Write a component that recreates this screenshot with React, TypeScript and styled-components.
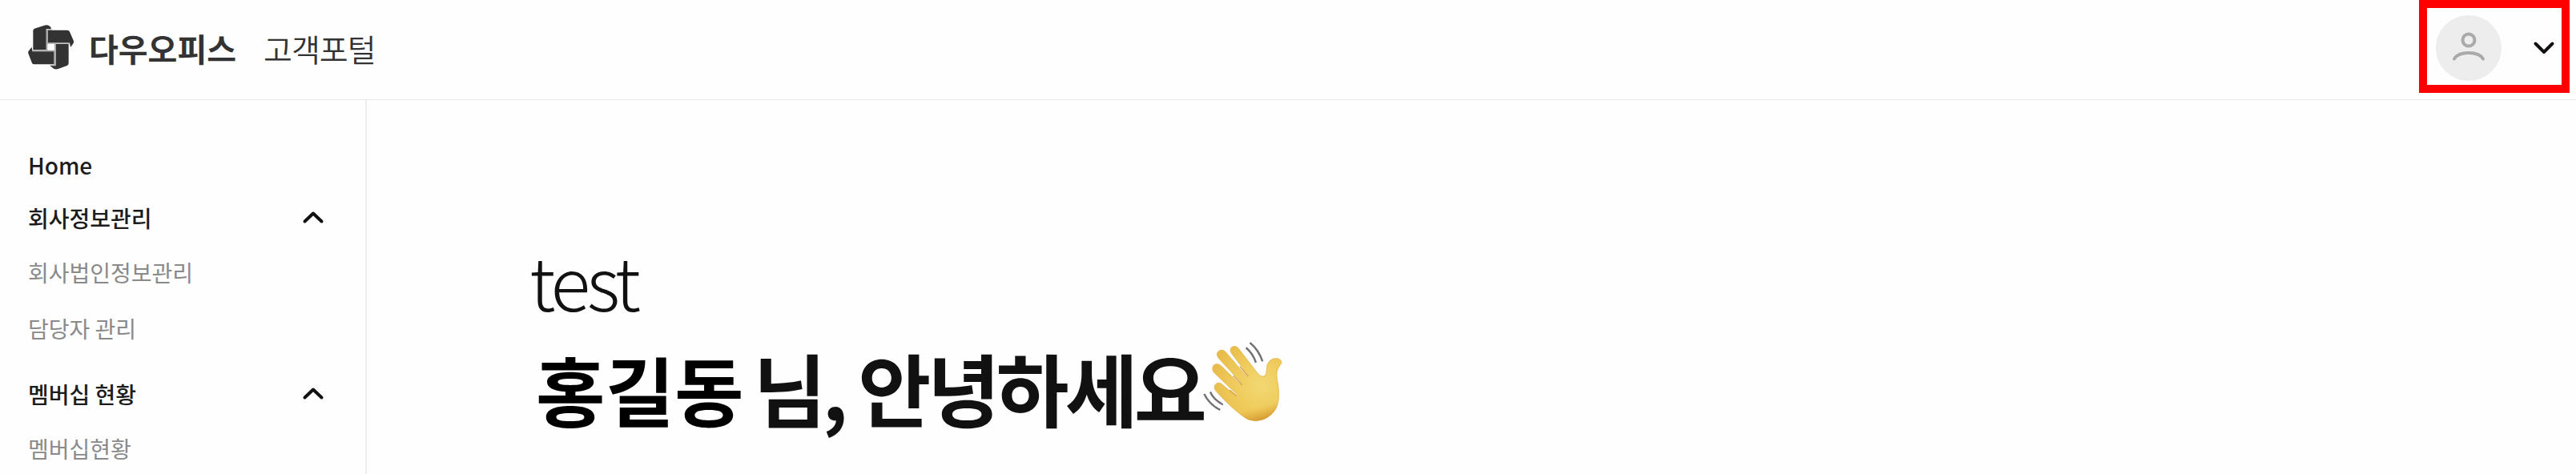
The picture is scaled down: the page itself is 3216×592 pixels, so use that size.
import React, { useState } from "react";
import styled, { createGlobalStyle } from "styled-components";

const GlobalStyle = createGlobalStyle`
  *, *::before, *::after { box-sizing: border-box; }
  html, body { margin: 0; padding: 0; }
  body {
    background: #fefefe;
    color: #111;
    font-family: "Noto Sans CJK KR", "Noto Sans", sans-serif;
  }
  button { font: inherit; color: inherit; background: none; cursor: pointer; }
  a { color: inherit; text-decoration: none; }
`;

const Page = styled.div`
  display: flex;
  flex-direction: column;
  min-height: 100vh;
`;

const Header = styled.header`
  display: flex;
  align-items: flex-start;
  justify-content: space-between;
  min-height: 125px;
  padding: 0 8px 0 34px;
  border-bottom: 1px solid #e8e8e8;
`;

const Brand = styled.a`
  display: flex;
  align-items: center;
  height: 120px;
  color: #333;
`;

const BrandName = styled.span`
  margin-left: 17px;
  font-size: 40px;
  font-weight: 700;
  line-height: 60px;
`;

const PortalName = styled.span`
  margin-left: 34px;
  font-size: 39px;
  font-weight: 350;
  line-height: 60px;
  letter-spacing: -1px;
`;

const UserButton = styled.button`
  display: flex;
  align-items: center;
  gap: 38px;
  height: 116px;
  padding: 4px 7px 0 11px;
  border: 10px solid #f00;
`;

const Avatar = styled.span`
  display: flex;
  width: 82px;
  height: 82px;
  border-radius: 50%;
  background: #ededed;
`;

const Body = styled.div`
  display: flex;
  flex: 1;
`;

const Sidebar = styled.nav`
  flex: none;
  width: 458px;
  padding: 48px 50px 0 35px;
  border-right: 2px solid #eee;
  color: #1c1c1c;
  font-size: 28px;
`;

const HomeLink = styled.a`
  display: block;
  font-weight: 500;
  line-height: 66px;
`;

const Group = styled.section`
  & + & { margin-top: 28px; }
`;

const GroupButton = styled.button`
  display: flex;
  align-items: center;
  justify-content: space-between;
  width: 100%;
  height: 66px;
  padding: 0;
  border: 0;
  font-weight: 500;
`;

const SubMenu = styled.ul`
  display: flex;
  flex-direction: column;
  gap: 28px;
  margin: 0;
  padding: 14px 0 0;
  list-style: none;
  color: #8a8a8a;
  line-height: 42px;
`;

const Main = styled.main`
  flex: 1;
  padding: 157px 40px 0 203px;
`;

const Greeting = styled.h1`
  margin: 0;
  font-size: 99px;
  font-weight: 700;
  line-height: 134px;
  letter-spacing: -0.05em;
`;

const Company = styled.span`
  display: block;
  font-size: 92px;
  font-weight: 300;
  letter-spacing: -0.05em;
`;

const UserName = styled.span`
  margin: 0 12px 0 8px;
  color: #000;
  font-size: 94px;
  letter-spacing: 0;
`;

const WaveIcon = styled.svg`
  width: 99px;
  height: 99px;
`;

const Chevron = ({ up = false }: { up?: boolean }) => (
  <svg width="30" height="20" viewBox="0 0 30 20" fill="none" stroke="#111" strokeWidth="4" strokeLinecap="round" strokeLinejoin="round" aria-hidden="true">
    <path d={up ? "M4.5 14.5 15 4.500 25.500 14.500" : "M4.500 4.500 15 15 25.500 4.500"} />
  </svg>
);

const Logo = () => (
  <svg width="60" height="60" viewBox="42 34 180 180" aria-hidden="true">
    <path fill="none" stroke="#aaa" strokeWidth="4" d="M61 132.500H116V55M116 55H134M116 106H202M146 190V106M146 190H128M61 134H144V186" />
    <g fill="#333">
      <path d="M64 130V59Q64 54 69 51L104 40Q115 36 123 40L131 47V52H113V130Z" />
      <path d="M119 57H192Q199 57 201 63L216 98Q217 104 213 109L204 121L201 104H119Z" />
      <path d="M149 109H197V181Q197 187 191 190L158 202Q148 205 141 201L128 191H149Z" />
      <path d="M59 120L61 137H142V185H68Q62 185 60 180L46 144Q44 139 47 135Z" />
    </g>
  </svg>
);

const UserGlyph = () => (
  <svg width="82" height="82" viewBox="0 0 82 82" fill="none" stroke="#aaa" strokeWidth="4" strokeLinecap="round" aria-hidden="true">
    <circle cx="41" cy="31" r="7.500" />
    <path d="M23 54.500C26 49.500 33 47 41 47S56 49.500 59 54.500" />
  </svg>
);

const Wave = () => (
  <WaveIcon viewBox="1170 79 288 288" role="img" aria-label="손 흔들기">
    <defs>
      <radialGradient id="skin" gradientUnits="userSpaceOnUse" cx="1380" cy="235" r="175">
        <stop offset="0" stopColor="#f2d873" />
        <stop offset="0.550" stopColor="#efcb5b" />
        <stop offset="1" stopColor="#e9bd4c" />
      </radialGradient>
      <linearGradient id="shade" gradientUnits="userSpaceOnUse" x1="1370" y1="240" x2="1405" y2="368">
        <stop offset="0.550" stopColor="#d99a2b" stopOpacity="0" />
        <stop offset="1" stopColor="#c98322" stopOpacity="0.850" />
      </linearGradient>
      <path id="hand" d="M1272 100C1280 92 1292 94 1298 102L1366 190C1374 201 1386 208 1394 202C1402 194 1400 180 1402 168C1405 150 1420 138 1438 139C1449 140 1456 148 1455 155C1452 163 1440 172 1438 190C1436 205 1440 220 1443 240C1448 285 1445 320 1415 345C1390 367 1350 372 1325 356C1295 337 1258 303 1217 258C1207 245 1211 231 1224 228C1233 227 1240 233 1246 239L1290 277L1295 272L1211 192C1201 181 1202 164 1216 160C1225 158 1233 163 1239 169L1307 237L1312 232L1226 138C1216 124 1221 112 1234 109C1243 107 1250 113 1255 119L1329 206L1334 201L1274 122C1268 112 1268 106 1272 100Z" />
    </defs>
    <use href="#hand" fill="url(#skin)" stroke="#e0aa3e" strokeWidth="2" />
    <use href="#hand" fill="url(#shade)" />
    <g fill="none" stroke="#d79c35" strokeWidth="4" strokeLinecap="round">
      <path d="M1290 274L1268 255M1310 234L1280 203M1332 203L1304 169" />
    </g>
    <g fill="none" stroke="#727272" strokeWidth="7">
      <path d="M1340 82Q1372 108 1386 150M1326 100Q1350 120 1362 154M1174 268Q1193 307 1232 326M1196 261Q1208 289 1242 307" />
    </g>
  </WaveIcon>
);

const groups = [
  { title: "회사정보관리", items: ["회사법인정보관리", "담당자 관리"] },
  { title: "멤버십 현황", items: ["멤버십현황"] },
];

const MenuGroup = ({ title, items }: { title: string; items: string[] }) => {
  const [open, setOpen] = useState(true);
  return (
    <Group>
      <GroupButton type="button" aria-expanded={open} onClick={() => setOpen(!open)}>
        {title}
        <Chevron up={open} />
      </GroupButton>
      {open && (
        <SubMenu>
          {items.map((item) => (
            <li key={item}><a href="#">{item}</a></li>
          ))}
        </SubMenu>
      )}
    </Group>
  );
};

export default function App() {
  return (
    <Page>
      <GlobalStyle />
      <Header>
        <Brand href="#">
          <Logo />
          <BrandName>다우오피스</BrandName>
          <PortalName>고객포털</PortalName>
        </Brand>
        <UserButton type="button" aria-label="사용자 메뉴">
          <Avatar><UserGlyph /></Avatar>
          <Chevron />
        </UserButton>
      </Header>
      <Body>
        <Sidebar>
          <HomeLink href="#">Home</HomeLink>
          {groups.map((group) => (
            <MenuGroup key={group.title} {...group} />
          ))}
        </Sidebar>
        <Main>
          <Greeting>
            <Company>test</Company>
            <UserName>홍길동</UserName>님, 안녕하세요<Wave />
          </Greeting>
        </Main>
      </Body>
    </Page>
  );
}
